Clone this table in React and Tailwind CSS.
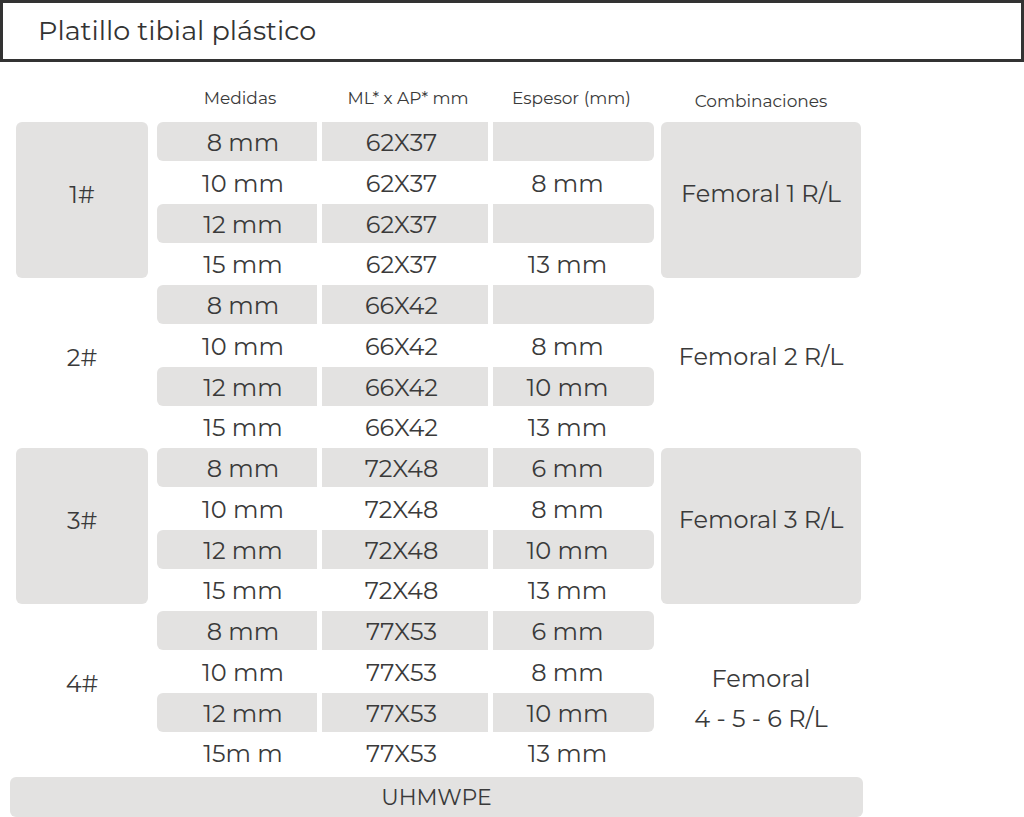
const groups = [
  {
    label: '1#',
    shadeSides: true,
    medidas: ['8 mm', '10 mm', '12 mm', '15 mm'],
    mlap: '62X37',
    espesor: ['', '8 mm', '', '13 mm'],
    combo: ['Femoral 1 R/L'],
  },
  {
    label: '2#',
    shadeSides: false,
    medidas: ['8 mm', '10 mm', '12 mm', '15 mm'],
    mlap: '66X42',
    espesor: ['', '8 mm', '10 mm', '13 mm'],
    combo: ['Femoral 2 R/L'],
  },
  {
    label: '3#',
    shadeSides: true,
    medidas: ['8 mm', '10 mm', '12 mm', '15 mm'],
    mlap: '72X48',
    espesor: ['6 mm', '8 mm', '10 mm', '13 mm'],
    combo: ['Femoral 3 R/L'],
  },
  {
    label: '4#',
    shadeSides: false,
    medidas: ['8 mm', '10 mm', '12 mm', '15m m'],
    mlap: '77X53',
    espesor: ['6 mm', '8 mm', '10 mm', '13 mm'],
    combo: ['Femoral', '4 - 5 - 6 R/L'],
  },
]

// one column of 4 rows, rows 1 and 3 shaded
const Column = ({ values, width, round, pad }) => (
  <div className={'flex flex-col ' + width}>
    {values.map((v, i) => (
      <div key={i} className="h-[40.75px]">
        <div
          className={
            'h-[39px] flex items-center justify-center pt-[3px] ' +
            pad +
            ' ' +
            (i % 2 === 0 ? 'bg-[#e3e2e1] ' + round : '')
          }
        >
          {v}
        </div>
      </div>
    ))}
  </div>
)

const Group = ({ g }) => (
  <div className="flex h-[163px] pl-[16px] text-[24px]">
    <div
      className={
        'w-[132px] h-[156px] rounded-md flex items-center justify-center pb-[10px] ' +
        (g.shadeSides ? 'bg-[#e3e2e1]' : '')
      }
    >
      {g.label}
    </div>
    <div className="ml-[9px]">
      <Column values={g.medidas} width="w-[160px]" round="rounded-l-md" pad="pl-[12px]" />
    </div>
    <div className="ml-[5px]">
      <Column values={[g.mlap, g.mlap, g.mlap, g.mlap]} width="w-[166px]" round="" pad="pr-[7px]" />
    </div>
    <div className="ml-[5px]">
      <Column values={g.espesor} width="w-[161px]" round="rounded-r-md" pad="pr-[12px]" />
    </div>
    <div
      className={
        'ml-[7px] w-[200px] h-[156px] rounded-md flex flex-col items-center justify-center leading-[40px] ' +
        (g.combo.length > 1 ? 'pt-[20px] ' : 'pb-[12px] ') +
        (g.shadeSides ? 'bg-[#e3e2e1]' : '')
      }
    >
      {g.combo.map((c, i) => (
        <div key={i}>{c}</div>
      ))}
    </div>
  </div>
)

export default function App() {
  return (
    <div
      className="w-[1024px] h-[817px] bg-white text-[#3a3a3a] overflow-hidden"
      style={{ fontFamily: 'Montserrat, "Noto Sans", sans-serif' }}
    >
      <div className="h-[62px] border-[3px] border-[#333] flex items-center pl-[35px] text-[27px] text-[#333]">
        Platillo tibial plástico
      </div>

      <div className="flex h-[60px] pl-[16px] text-[17px] items-end pb-[11px]">
        <div className="w-[132px]"></div>
        <div className="ml-[9px] w-[160px] text-center pl-[6px]">Medidas</div>
        <div className="ml-[5px] w-[166px] text-center pl-[6px]">ML* x AP* mm</div>
        <div className="ml-[5px] w-[161px] text-center pr-[4px]">Espesor (mm)</div>
        <div className="ml-[7px] w-[200px] text-center translate-y-[3px]">Combinaciones</div>
      </div>

      {groups.map((g) => (
        <Group key={g.label} g={g} />
      ))}

      <div className="mt-[3px] ml-[10px] w-[853px] h-[40px] rounded-md bg-[#e3e2e1] flex items-center justify-center text-[22px]">
        UHMWPE
      </div>
    </div>
  )
}
